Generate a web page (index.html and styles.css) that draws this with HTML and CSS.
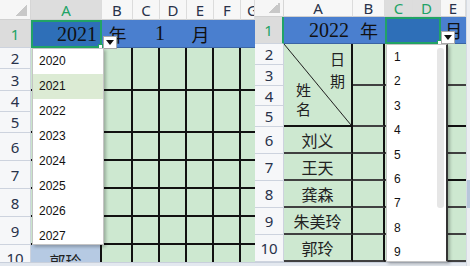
FILE: index.html
```html
<!DOCTYPE html>
<html lang="zh">
<head>
    <meta charset="UTF-8">
    <meta name="viewport" content="width=device-width, initial-scale=1.0">
    <title>年月下拉菜单</title>
    <link rel="stylesheet" href="styles.css">
</head>
<body>
    <div class="desk">
        <!-- left sheet: year picker open -->
        <div class="sheet left">
            <div class="corner"></div>
            <div class="colhead on">A</div>
            <div class="colhead">B</div>
            <div class="colhead">C</div>
            <div class="colhead">D</div>
            <div class="colhead">E</div>
            <div class="colhead">F</div>
            <div class="colhead cut">G</div>

            <div class="rowhead on">1</div>
            <div class="band pick num">2021</div>
            <div class="band">年</div>
            <div class="band span2 num">1</div>
            <div class="band">月</div>
            <div class="band"></div>
            <div class="band"></div>

            <div class="rowhead">2</div>
            <div class="cell r2"></div>
            <div class="cell r2"></div>
            <div class="cell r2"></div>
            <div class="cell r2"></div>
            <div class="cell r2"></div>
            <div class="cell r2"></div>
            <div class="cell r2 last"></div>
            <div class="rowhead">3</div>

            <div class="rowhead">4</div>
            <div class="cell r2"></div>
            <div class="cell r2"></div>
            <div class="cell r2"></div>
            <div class="cell r2"></div>
            <div class="cell r2"></div>
            <div class="cell r2"></div>
            <div class="cell r2 last"></div>
            <div class="rowhead">5</div>

            <div class="rowhead">6</div>
            <div class="cell"></div><div class="cell"></div><div class="cell"></div><div class="cell"></div>
            <div class="cell"></div><div class="cell"></div><div class="cell last"></div>
            <div class="rowhead">7</div>
            <div class="cell"></div><div class="cell"></div><div class="cell"></div><div class="cell"></div>
            <div class="cell"></div><div class="cell"></div><div class="cell last"></div>
            <div class="rowhead">8</div>
            <div class="cell"></div><div class="cell"></div><div class="cell"></div><div class="cell"></div>
            <div class="cell"></div><div class="cell"></div><div class="cell last"></div>
            <div class="rowhead">9</div>
            <div class="cell"></div><div class="cell"></div><div class="cell"></div><div class="cell"></div>
            <div class="cell"></div><div class="cell"></div><div class="cell last"></div>

            <div class="rowhead clip">10</div>
            <div class="cell clip chosen name">郭玲</div>
            <div class="cell clip"></div><div class="cell clip"></div><div class="cell clip"></div>
            <div class="cell clip"></div><div class="cell clip"></div><div class="cell clip last"></div>

            <div class="foot"></div>

            <div class="drop-btn btn-year">
                <svg width="8" height="5" viewBox="0 0 8 5"><polygon points="0,0 8,0 4,5" fill="#111"/></svg>
            </div>
            <div class="drop-list year-list">
                <div class="opt">2020</div>
                <div class="opt hl">2021</div>
                <div class="opt">2022</div>
                <div class="opt">2023</div>
                <div class="opt">2024</div>
                <div class="opt">2025</div>
                <div class="opt">2026</div>
                <div class="opt">2027</div>
            </div>
        </div>

        <!-- right sheet: month picker open -->
        <div class="sheet right">
            <div class="corner"></div>
            <div class="colhead">A</div>
            <div class="colhead">B</div>
            <div class="colhead on">C</div>
            <div class="colhead on">D</div>
            <div class="colhead">E</div>
            <div class="vscroll"><div class="thumb"></div></div>

            <div class="rowhead on">1</div>
            <div class="band num end">2022</div>
            <div class="band">年</div>
            <div class="band pick span2"></div>
            <div class="band">月</div>

            <div class="rowhead">2</div>
            <div class="cell r4 diag">
                <div class="stack low"><span>姓</span><span>名</span></div>
                <div class="stack high"><span>日</span><span>期</span></div>
            </div>
            <div class="cell r2 dim"></div>
            <div class="cell r2 dim"></div>
            <div class="cell r2 dim"></div>
            <div class="cell r2 dim last"></div>
            <div class="rowhead">3</div>
            <div class="rowhead">4</div>
            <div class="cell r2 dim"></div>
            <div class="cell r2 dim"></div>
            <div class="cell r2 dim"></div>
            <div class="cell r2 last"></div>
            <div class="rowhead">5</div>

            <div class="rowhead">6</div>
            <div class="cell dim name">刘义</div>
            <div class="cell dim"></div><div class="cell dim"></div><div class="cell dim"></div><div class="cell dim last"></div>
            <div class="rowhead">7</div>
            <div class="cell dim name">王天</div>
            <div class="cell dim"></div><div class="cell dim"></div><div class="cell dim"></div><div class="cell last"></div>
            <div class="rowhead">8</div>
            <div class="cell dim name">龚森</div>
            <div class="cell dim"></div><div class="cell dim"></div><div class="cell dim"></div><div class="cell dim last"></div>
            <div class="rowhead">9</div>
            <div class="cell dim name">朱美玲</div>
            <div class="cell dim"></div><div class="cell dim"></div><div class="cell dim"></div><div class="cell dim last"></div>
            <div class="rowhead">10</div>
            <div class="cell dim name">郭玲</div>
            <div class="cell dim"></div><div class="cell dim"></div><div class="cell dim"></div><div class="cell dim last"></div>

            <div class="foot"></div>

            <div class="drop-btn btn-month">
                <svg width="8" height="5" viewBox="0 0 8 5"><polygon points="0,0 8,0 4,5" fill="#111"/></svg>
            </div>
            <div class="drop-list month-list">
                <div class="bar"></div>
                <div class="opt">1</div>
                <div class="opt">2</div>
                <div class="opt">3</div>
                <div class="opt">4</div>
                <div class="opt">5</div>
                <div class="opt">6</div>
                <div class="opt">7</div>
                <div class="opt">8</div>
                <div class="opt">9</div>
            </div>
        </div>
    </div>
</body>
</html>
```

FILE: styles.css
```css
body {
    margin: 0;
    font-family: "Noto Sans", "Noto Sans CJK SC", sans-serif;
    background-color: #fff;
}
.desk {
    display: flex;
    width: 470px;
    height: 266px;
    overflow: hidden;
}
.sheet {
    position: relative;
    display: grid;
    overflow: hidden;
    flex: none;
}
.left {
    width: 255px;
    grid-template-columns: 31px 71px 31px 27px 27px 27px 27px 14px;
    grid-template-rows: 20px 28px 21px 22px 21px 21px 28px 28px 28px 28px 17px 4px;
}
.right {
    width: 215px;
    grid-template-columns: 29px 69px 32px 28px 28px 25px 4px;
    grid-template-rows: 17px 27px 21px 21px 20px 21px 27px 27px 27px 27px 27px 4px;
}

/* headers */
.corner {
    background: linear-gradient(to bottom right, transparent 50%, #c8c8c8 50%) no-repeat right 3px bottom 3px / 11px 11px, #f6f6f6;
    border-right: 1px solid #d6d6d6;
    border-bottom: 1px solid #d0d0d0;
}
.colhead {
    display: flex;
    align-items: center;
    justify-content: center;
    font-size: 15px;
    color: #28324a;
    background-color: #f7f7f7;
    border-right: 1px solid #dcdcdc;
    border-bottom: 1px solid #d0d0d0;
    overflow: hidden;
}
.colhead.cut {
    justify-content: flex-start;
    padding-left: 6px;
}
.colhead.on {
    background-color: #dddddd;
    color: #21a366;
}
.rowhead {
    display: flex;
    align-items: center;
    justify-content: center;
    font-size: 15px;
    color: #28324a;
    background-color: #f6f7f9;
    border-right: 1px solid #cdd3de;
    border-bottom: 1px solid #cdd3de;
}
.rowhead.on {
    background-color: #dcdcdc;
    color: #21a366;
}
.right .rowhead.on {
    border-right: 2px solid #21a366;
}

/* row 1 title band */
.band {
    display: flex;
    align-items: center;
    justify-content: center;
    background-color: #4a7fcf;
    border-bottom: 1px solid #3a64a4;
    font-family: "Liberation Serif", "Noto Sans CJK SC", serif;
    font-size: 18px;
    color: #111;
}
.band.num {
    font-size: 20px;
}
.band.end {
    justify-content: flex-end;
    padding-right: 4px;
}
.band.pick {
    position: relative;
    background-color: #2e6fb8;
    border: 2px solid #21a366;
    justify-content: flex-end;
    padding-right: 3px;
}
.band.pick::after {
    content: "";
    position: absolute;
    right: -3px;
    bottom: -3px;
    width: 3px;
    height: 3px;
    background-color: #fff;
    border: 1px solid #21a366;
}
.span2 {
    grid-column: span 2;
}

/* body cells */
.cell {
    box-sizing: border-box;
    background-color: #cde8d0;
    border-right: 2px solid #111;
    border-bottom: 2px solid #111;
}
.cell.last {
    border-right: none;
}
.cell.dim {
    border-bottom-color: #404040;
}
.r2 {
    grid-row: span 2;
}
.r4 {
    grid-row: span 4;
}
.cell.clip {
    border-bottom: none;
    overflow: hidden;
    align-items: flex-start;
}
.rowhead.clip {
    align-items: flex-start;
    padding-top: 3px;
    overflow: hidden;
    border-bottom: none;
}
.name {
    display: flex;
    align-items: center;
    justify-content: center;
    font-family: "Noto Sans CJK SC", sans-serif;
    font-size: 16px;
    color: #222;
}
.cell.chosen {
    background-color: #b6cae3;
    padding-top: 4px;
}

/* header cell with diagonal */
.diag {
    display: flex;
    justify-content: space-between;
    background: linear-gradient(to top right, transparent calc(50% - 0.8px), #222 50%, transparent calc(50% + 0.8px)), #cde8d0;
    font-family: "Noto Sans CJK SC", sans-serif;
    font-size: 15px;
    color: #222;
}
.stack {
    display: flex;
    flex-direction: column;
}
.stack.low {
    justify-content: flex-end;
    padding: 0 0 7px 12px;
    line-height: 19px;
}
.stack.high {
    padding: 4px 6px 0 0;
    line-height: 22px;
}

.foot {
    grid-column: 1 / -1;
    background-color: #e3e8ef;
    border-top: 1px solid #c8cfdb;
}
.right .foot {
    grid-column: span 6;
}
.vscroll {
    grid-column: 7;
    grid-row: 1 / -1;
    background-color: #eceef2;
    border-left: 1px solid #d6dbe3;
}
.thumb {
    margin-top: 180px;
    height: 28px;
    background-color: #b7c7db;
}

/* dropdowns */
.drop-btn {
    position: absolute;
    display: flex;
    align-items: center;
    justify-content: center;
    width: 14px;
    height: 13px;
    box-sizing: border-box;
    background-color: #fff;
    border: 1px solid #a9a9a9;
}
.btn-year {
    left: 103px;
    top: 36px;
}
.btn-month {
    left: 186px;
    top: 31px;
}
.drop-list {
    position: absolute;
    box-sizing: border-box;
    background-color: #fff;
    border: 1px solid #c4c4c4;
    box-shadow: 2px 2px 3px rgba(0,0,0,0.25);
    overflow: hidden;
    font-family: "Liberation Sans", Arial, sans-serif;
    font-size: 12px;
    color: #111;
}
.year-list {
    left: 32px;
    top: 48px;
    width: 72px;
    height: 197px;
}
.year-list .opt {
    height: 25px;
    line-height: 25px;
    padding-left: 6px;
}
.opt.hl {
    background-color: #dcebd4;
}
.month-list {
    left: 131px;
    top: 44px;
    width: 62px;
    height: 218px;
    border-right: 2px solid #333;
}
.month-list .opt {
    height: 24.4px;
    line-height: 24.4px;
    padding-left: 7px;
}
.month-list .bar {
    position: absolute;
    right: 2px;
    top: 3px;
    width: 7px;
    height: 160px;
    border-radius: 3px;
    background-color: #e6e6e6;
}
```
